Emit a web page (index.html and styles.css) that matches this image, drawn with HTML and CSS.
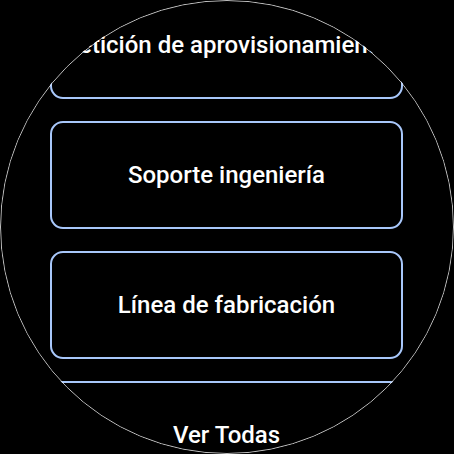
FILE: index.html
```html
<!DOCTYPE html>
<html lang="es">
<head>
<meta charset="utf-8">
<link rel="stylesheet" href="styles.css">
</head>
<body>
<div class="watch">
  <div class="list">
    <div class="chip">Petición de aprovisionamiento</div>
    <div class="chip">Soporte ingeniería</div>
    <div class="chip">Línea de fabricación</div>
    <div class="chip">Ver Todas</div>
  </div>
  <div class="rim"></div>
</div>
</body>
</html>
```
FILE: styles.css
```css
html, body {
  margin: 0;
  padding: 0;
  background: #000;
  width: 454px;
  height: 454px;
  overflow: hidden;
}
.watch {
  position: relative;
  width: 454px;
  height: 454px;
  border-radius: 50%;
  overflow: hidden;
  background: #000;
}
.list {
  display: flex;
  flex-direction: column;
  gap: 22px;
  margin-top: -9px;
  padding: 0 51px 0 50px;
}
.chip {
  flex: none;
  height: 108px;
  box-sizing: border-box;
  border: 2px solid #a8c7fa;
  border-radius: 13px;
  display: flex;
  align-items: center;
  justify-content: center;
  white-space: nowrap;
  color: #fff;
  font-family: Roboto, "Noto Sans", sans-serif;
  font-weight: 500;
  font-size: 24px;
}
.rim {
  position: absolute;
  inset: 0;
  border-radius: 50%;
  border: 1px solid rgba(255,255,255,0.75);
  pointer-events: none;
}
```
